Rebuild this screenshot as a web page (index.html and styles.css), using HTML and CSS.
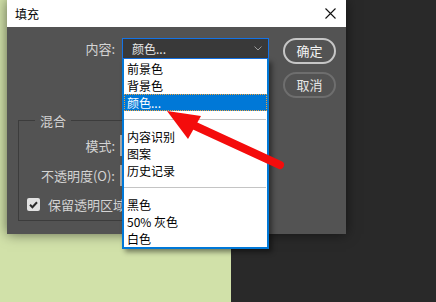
FILE: index.html
```html
<!DOCTYPE html>
<html lang="zh">
<head>
    <meta charset="UTF-8">
    <meta name="viewport" content="width=device-width, initial-scale=1.0">
    <title>填充</title>
    <link rel="stylesheet" href="styles.css">
</head>
<body>
    <!-- 背景桌面 -->
    <div class="desktop">
        <div class="pane-green"></div>
        <div class="pane-dark"></div>
    </div>

    <!-- 填充对话框 -->
    <div class="dialog">
        <div class="title-bar">
            <span class="title">填充</span>
            <svg class="close" width="11" height="11" viewBox="0 0 11 11">
                <path d="M0.5 0.5L10.5 10.5M10.5 0.5L0.5 10.5" stroke="#111" stroke-width="1.1" fill="none"/>
            </svg>
        </div>

        <div class="dialog-body">
            <div class="form">
                <div class="row">
                    <label class="label">内容:</label>
                    <div class="select active">
                        <span>颜色...</span>
                        <svg width="8" height="5" viewBox="0 0 8 5">
                            <path d="M0.5 0.5L4 4L7.5 0.5" stroke="#9a9a9a" stroke-width="1" fill="none"/>
                        </svg>
                    </div>
                </div>

                <fieldset class="group">
                    <legend>混合</legend>
                    <div class="row">
                        <label class="label">模式:</label>
                        <div class="select light"></div>
                    </div>
                    <div class="row">
                        <label class="label">不透明度(O):</label>
                        <div class="select light"></div>
                    </div>
                    <div class="check-row">
                        <span class="checkbox">
                            <svg width="13" height="13" viewBox="0 0 13 13">
                                <path d="M3 6.8L5.4 9.2L10 4.2" stroke="#2b2b2b" stroke-width="2" fill="none"/>
                            </svg>
                        </span>
                        <span>保留透明区域</span>
                    </div>
                </fieldset>
            </div>

            <div class="buttons">
                <button class="btn primary">确定</button>
                <button class="btn">取消</button>
            </div>
        </div>

        <!-- 内容下拉列表 -->
        <ul class="dropdown">
            <li>前景色</li>
            <li>背景色</li>
            <li class="selected">颜色...</li>
            <li class="separator"><hr></li>
            <li>内容识别</li>
            <li>图案</li>
            <li>历史记录</li>
            <li class="separator"><hr></li>
            <li>黑色</li>
            <li>50% 灰色</li>
            <li>白色</li>
        </ul>
    </div>

    <!-- 红色箭头标注 -->
    <svg class="arrow" width="436" height="302" viewBox="0 0 436 302">
        <line x1="193" y1="125" x2="280" y2="165" stroke="#f40c0c" stroke-width="8" stroke-linecap="round"/>
        <polygon points="167,111 201,116 188,139" fill="#f40c0c"/>
    </svg>
</body>
</html>
```

FILE: styles.css
```css
* {
    margin: 0;
    padding: 0;
    box-sizing: border-box;
}

body {
    width: 436px;
    height: 302px;
    overflow: hidden;
    position: relative;
    font-family: "Noto Sans CJK SC", "Noto Sans", sans-serif;
}

/* 背景 */
.desktop {
    display: flex;
    height: 100%;
}

.pane-green {
    width: 231px;
    background: #d1e1a9;
}

.pane-dark {
    flex: 1;
    background: #292929;
}

/* 对话框 */
.dialog {
    position: absolute;
    left: 7px;
    top: 0;
    width: 339px;
    height: 234px;
    background: #535353;
    box-shadow: 0 0 12px rgba(0, 0, 0, 0.55);
}

.title-bar {
    height: 27px;
    background: #fff;
    display: flex;
    align-items: center;
    justify-content: space-between;
    padding: 0 10px 0 8px;
}

.title {
    font-size: 12px;
    line-height: 17px;
    color: #000;
}

.dialog-body {
    display: flex;
    padding: 11px 10px 0 11px;
}

.form {
    width: 251px;
}

.row {
    display: flex;
    align-items: center;
    height: 21px;
}

.label {
    width: 97px;
    margin-right: 7px;
    text-align: right;
    font-size: 13px;
    line-height: 21px;
    color: #d4d4d4;
}

.select {
    width: 147px;
    height: 21px;
    display: flex;
    align-items: center;
    justify-content: space-between;
    padding: 0 6px 0 9px;
    font-size: 12px;
    color: #e8e8e8;
}

.select.active {
    background: #393939;
    border: 1px solid #1473e6;
}

.select.light {
    background: #a9a9a9;
}

/* 混合分组 */
.group {
    margin-top: 53px;
    border: 1px solid #3c3c3c;
    padding: 5px 0 6px 0;
    min-width: 0;
}

.group legend {
    margin-left: 16px;
    padding: 0 5px;
    font-size: 13px;
    line-height: 17px;
    color: #d4d4d4;
}

.group .row {
    height: 22px;
    margin-bottom: 8px;
}

.group .label {
    width: 96px;
    margin-right: 5px;
}

.check-row {
    display: flex;
    align-items: center;
    height: 20px;
    padding-left: 8px;
    gap: 8px;
    font-size: 13px;
    color: #d4d4d4;
    white-space: nowrap;
}

.checkbox {
    width: 13px;
    height: 13px;
    background: #e2e2e2;
    border-radius: 2px;
    display: flex;
}

/* 按钮 */
.buttons {
    display: flex;
    flex-direction: column;
    gap: 8px;
    margin-left: 14px;
}

.btn {
    width: 53px;
    height: 26px;
    border-radius: 13px;
    background: transparent;
    border: 2px solid #6e6e6e;
    color: #e6e6e6;
    font-family: inherit;
    font-size: 13px;
    line-height: 20px;
}

.btn.primary {
    border-color: #c6c6c6;
    color: #f4f4f4;
}

/* 下拉列表 */
.dropdown {
    position: absolute;
    left: 115px;
    top: 59px;
    width: 147px;
    height: 190px;
    list-style: none;
    background: #fff;
    border: 2px solid #0078d7;
    border-top: none;
    padding-top: 1px;
    box-shadow: 3px 3px 5px rgba(0, 0, 0, 0.45);
}

.dropdown li {
    height: 17px;
    line-height: 17px;
    padding-left: 3px;
    font-size: 12px;
    color: #000;
}

.dropdown li.selected {
    background: #0078d7;
    color: #fff;
    outline: 1px dotted #f0a23c;
    outline-offset: -1px;
}

.dropdown li.separator {
    padding: 8px 1px 0 0;
}

.dropdown hr {
    border: none;
    border-top: 1px solid #c4c4c4;
}

/* 箭头 */
.arrow {
    position: absolute;
    left: 0;
    top: 0;
    pointer-events: none;
}
```
